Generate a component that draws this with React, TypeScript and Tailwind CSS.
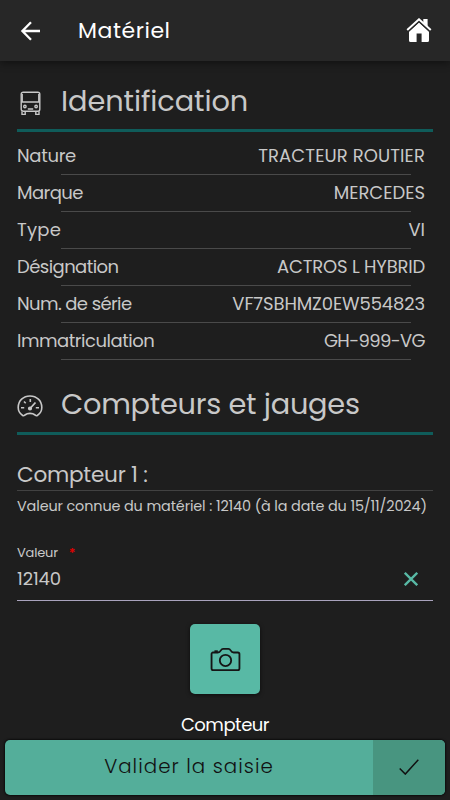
import type { ReactNode } from "react";

const details = [
  { label: "Nature", value: "TRACTEUR ROUTIER", labelClass: "tracking-[-0.3px]", valueClass: "tracking-[0.1px]" },
  { label: "Marque", value: "MERCEDES", labelClass: "tracking-[-0.55px]", valueClass: "tracking-[0px]" },
  { label: "Type", value: "VI", labelClass: "tracking-[0.2px]", valueClass: "tracking-[0px]" },
  { label: "Désignation", value: "ACTROS L HYBRID", labelClass: "tracking-[-0.55px]", valueClass: "tracking-[-0.2px]" },
  { label: "Num. de série", value: "VF7SBHMZ0EW554823", labelClass: "tracking-[-0.6px]", valueClass: "tracking-[-0.12px]" },
  { label: "Immatriculation", value: "GH-999-VG", labelClass: "tracking-[-0.48px]", valueClass: "tracking-[-0.6px]" },
];

function ArrowIcon() {
  return (
    <svg width="20" height="20" viewBox="0 0 20 20" fill="none" stroke="currentColor" strokeWidth="2.3">
      <path d="M11 1.300 2.400 10 11 18.700M2.500 10H20" />
    </svg>
  );
}

function HomeIcon() {
  return (
    <svg width="26" height="26" viewBox="0 0 26 26" fill="currentColor">
      <path d="M3 13.800 13 4.400l10 9.400v8.600a1.600 1.600 0 0 1-1.600 1.600H15.600v-8.400h-5V24H4.600A1.600 1.600 0 0 1 3 22.400z" />
      <path d="M1.200 13.200 13 2.400l11.800 10.800" fill="none" stroke="#272727" strokeWidth="3" />
      <path d="M17.300 1h4.300v7.500L17.300 4.500z" />
      <path d="M1.200 12 13 1.300 24.800 12" fill="none" stroke="currentColor" strokeWidth="2" />
    </svg>
  );
}

function BusIcon() {
  return (
    <svg width="22" height="26" viewBox="0 0 22 26" fill="none" stroke="currentColor" strokeWidth="1.400">
      <rect x="1.200" y="1.200" width="18.600" height="19" rx="2" />
      <path d="M1.200 11h18.600M2.200 3v8M18.800 3v8" />
      <path d="M2 20.200v3.200h3.200v-3.200M15.800 20.200v3.200H19v-3.200M7.800 18h5.400" />
      <circle cx="4.900" cy="15.500" r="1.200" />
      <circle cx="16.100" cy="15.500" r="1.200" />
    </svg>
  );
}

function GaugeIcon() {
  return (
    <svg width="26" height="24" viewBox="0 0 26 24" fill="none" stroke="currentColor" strokeWidth="1.600">
      <path d="M5.700 21.500C2.800 19.600 1.200 16.800 1.200 13.500 1.200 6.700 6.400 2 13 2s11.800 4.700 11.800 11.500c0 3.300-1.600 6.100-4.500 8-.8.500-1.500.2-2.200-.5-2.800-2.200-7.400-2.200-10.200 0-.7.700-1.400 1-2.200.500z" />
      <path d="M13.300 5v3M7 7.500l1.700 1.700M4 13.800h3.200M18.800 13.800H22" />
      <path d="m13 14.500 5.500-6" strokeWidth="1.800" />
      <circle cx="13" cy="14.500" r="1.300" fill="currentColor" />
    </svg>
  );
}

function CameraIcon() {
  return (
    <svg width="31" height="25" viewBox="0 0 32 26" fill="none" stroke="currentColor" strokeWidth="1.900" strokeLinejoin="round">
      <path d="M3 5.700h5c1.800 0 2.400-.8 3.200-2.200.6-1 1-1.500 2.300-1.500h5.500c1.300 0 1.700.500 2.300 1.500.8 1.400 1.400 2.200 3.200 2.200h4.300A1.700 1.700 0 0 1 30.500 7.400v15a1.700 1.700 0 0 1-1.700 1.700H3.200a1.700 1.700 0 0 1-1.700-1.700v-15A1.600 1.600 0 0 1 3 5.700z" />
      <path d="M4.500 4.400H8" />
      <circle cx="16" cy="14" r="5.900" />
    </svg>
  );
}

function SectionTitle({ icon, children }: { icon: ReactNode; children: ReactNode }) {
  return (
    <div className="flex h-[53px] border-b-[3px] border-[#0f5c5a]">
      <div className="flex w-11 shrink-0">{icon}</div>
      <h2 className="whitespace-nowrap pt-px text-[28.8px] leading-[42px]">{children}</h2>
    </div>
  );
}

export default function App() {
  return (
    <div className="flex h-[800px] w-[450px] flex-col overflow-hidden bg-[#1e1e1e] font-[Poppins,Inter,sans-serif] text-[#c8c8c8] [font-feature-settings:'cv11']">
      {/* Top bar */}
      <header className="z-10 flex h-[61px] shrink-0 items-center bg-[#272727] pr-[18px] pl-5 text-white shadow-[0_2px_8px_rgba(0,0,0,0.45)]">
        <ArrowIcon />
        <h1 className="ml-[38px] flex-1 text-[22px] leading-8 tracking-[0.55px]">Matériel</h1>
        <HomeIcon />
      </header>

      <main className="flex min-h-0 flex-1 flex-col px-[17px] pt-[18px]">
        <SectionTitle icon={<div className="pt-3 pl-[3px]"><BusIcon /></div>}>
          <span className="tracking-[-0.08px]">Identification</span>
        </SectionTitle>

        <div className="mt-1.5">
          {details.map((d) => (
            <div key={d.label} className="h-[37px]">
              <div className="flex h-9 items-center justify-between pr-2 pb-px text-[18px] whitespace-nowrap">
                <span className={d.labelClass}>{d.label}</span>
                <span className={d.valueClass}>{d.value}</span>
              </div>
              <div className="mr-[22px] ml-11 h-px bg-[#4a4a4a]" />
            </div>
          ))}
        </div>

        <div className="mt-[22px]">
          <SectionTitle icon={<div className="pt-3"><GaugeIcon /></div>}>
            <span className="tracking-[-0.25px]">Compteurs et jauges</span>
          </SectionTitle>
        </div>

        {/* Counter */}
        <h3 className="mt-6 h-8 border-b border-[#424242] text-[21.6px] leading-[31px] tracking-[-0.25px]">Compteur 1 :</h3>
        <p className="h-[30px] whitespace-nowrap text-[14.4px] leading-[30px] tracking-[-0.12px]">
          Valeur connue du matériel : 12140 (à la date du 15/11/2024)
        </p>

        <div className="mt-[22px] flex h-[58px] flex-col border-b border-[#a9a3bd]">
          <label className="flex h-5 items-center text-[13px] tracking-[-0.2px]">
            Valeur<span className="ml-[11px] font-semibold text-[#e00000]">*</span>
          </label>
          <div className="flex h-[31px] items-center justify-between pr-[15px] text-[18px] tracking-[-0.1px]">
            <span>12140</span>
            <svg width="14" height="14" viewBox="0 0 14 14" fill="none" stroke="#58b9a5" strokeWidth="2.300">
              <path d="m.8.800 12.400 12.400M13.200.800.800 13.200" />
            </svg>
          </div>
        </div>

        <div className="mt-[23px] flex flex-col items-center">
          <button className="flex size-[70px] items-center justify-center rounded-[5px] bg-[#58b9a5] text-[#151515] shadow-[0_1px_4px_rgba(0,0,0,0.6)]">
            <CameraIcon />
          </button>
          <span className="mt-[17px] text-[18px] leading-7 tracking-[-0.5px] text-white">Compteur</span>
        </div>
      </main>

      {/* Submit */}
      <footer className="z-10 h-[61px] shrink-0 bg-[#1e1e1e] px-[5px]">
        <button className="mt-px flex h-[55px] w-full overflow-hidden rounded-[5px] bg-[#54ae9a] text-[#111] shadow-[0_0_2px_1px_rgba(0,0,0,0.6)]">
          <span className="flex h-full w-[368px] items-center justify-center pb-0.5 text-[19.8px] font-light tracking-[1.05px]">
            Valider la saisie
          </span>
          <span className="flex h-full flex-1 items-center justify-center bg-[#489580] pb-0.5">
            <svg width="20" height="16" viewBox="0 0 20 16" fill="none" stroke="currentColor" strokeWidth="1.500">
              <path d="m.7 9.500 5.600 5.600L19.300.700" />
            </svg>
          </span>
        </button>
      </footer>
    </div>
  );
}
